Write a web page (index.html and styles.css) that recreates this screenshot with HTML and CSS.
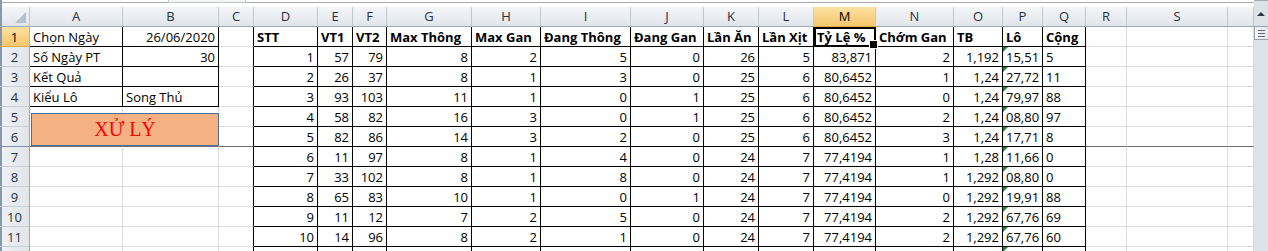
FILE: index.html
```html
<!DOCTYPE html>
<html lang="vi">
<head>
    <meta charset="UTF-8">
    <title>Thống kê lô</title>
    <link rel="stylesheet" href="styles.css">
</head>
<body>

<div class="app">
    <div class="sheet">
        <div class="formula"><span class="grip"></span></div>

        <div class="grid">
            <!-- column letters -->
            <div class="ch corner"></div>
            <div class="ch">A</div><div class="ch">B</div><div class="ch">C</div><div class="ch">D</div>
            <div class="ch">E</div><div class="ch">F</div><div class="ch">G</div><div class="ch">H</div>
            <div class="ch">I</div><div class="ch">J</div><div class="ch">K</div><div class="ch">L</div>
            <div class="ch hl">M</div><div class="ch">N</div><div class="ch">O</div><div class="ch">P</div>
            <div class="ch">Q</div><div class="ch">R</div><div class="ch">S</div><div class="ch"></div>

            <!-- 1 -->
            <div class="rh hl">1</div>
            <div class="b">Chọn Ngày</div><div class="b r">26/06/2020</div><div class="cr"></div>
            <div class="b h">STT</div><div class="b h">VT1</div><div class="b h">VT2</div><div class="b h">Max Thông</div>
            <div class="b h">Max Gan</div><div class="b h">Đang Thông</div><div class="b h">Đang Gan</div><div class="b h">Lần Ăn</div>
            <div class="b h">Lần Xịt</div><div class="b h act">Tỷ Lệ %</div><div class="b h">Chớm Gan</div><div class="b h">TB</div>
            <div class="b h">Lô</div><div class="b h">Cộng</div>
            <div></div><div></div><div></div>

            <!-- 2 -->
            <div class="rh">2</div>
            <div class="b">Số Ngày PT</div><div class="b r">30</div><div class="cr"></div>
            <div class="b r">1</div><div class="b r">57</div><div class="b r">79</div><div class="b r">8</div>
            <div class="b r">2</div><div class="b r">5</div><div class="b r">0</div><div class="b r">26</div>
            <div class="b r">5</div><div class="b r">83,871</div><div class="b r">2</div><div class="b r">1,192</div>
            <div class="b t">15,51</div><div class="b">5</div>
            <div></div><div></div><div></div>

            <!-- 3 -->
            <div class="rh">3</div>
            <div class="b">Kết Quả</div><div class="b"></div><div class="cr"></div>
            <div class="b r">2</div><div class="b r">26</div><div class="b r">37</div><div class="b r">8</div>
            <div class="b r">1</div><div class="b r">3</div><div class="b r">0</div><div class="b r">25</div>
            <div class="b r">6</div><div class="b r">80,6452</div><div class="b r">1</div><div class="b r">1,24</div>
            <div class="b t">27,72</div><div class="b">11</div>
            <div></div><div></div><div></div>

            <!-- 4 -->
            <div class="rh">4</div>
            <div class="b">Kiểu Lô</div><div class="b">Song Thủ</div><div class="cr"></div>
            <div class="b r">3</div><div class="b r">93</div><div class="b r">103</div><div class="b r">11</div>
            <div class="b r">1</div><div class="b r">0</div><div class="b r">1</div><div class="b r">25</div>
            <div class="b r">6</div><div class="b r">80,6452</div><div class="b r">0</div><div class="b r">1,24</div>
            <div class="b t">79,97</div><div class="b">88</div>
            <div></div><div></div><div></div>

            <!-- 5 -->
            <div class="rh">5</div>
            <div></div><div></div><div class="cr"></div>
            <div class="b r">4</div><div class="b r">58</div><div class="b r">82</div><div class="b r">16</div>
            <div class="b r">3</div><div class="b r">0</div><div class="b r">1</div><div class="b r">25</div>
            <div class="b r">6</div><div class="b r">80,6452</div><div class="b r">2</div><div class="b r">1,24</div>
            <div class="b t">08,80</div><div class="b">97</div>
            <div></div><div></div><div></div>

            <!-- 6 (frozen pane below) -->
            <div class="rh fz">6</div>
            <div class="fz"></div><div class="fz"></div><div class="cr fz"></div>
            <div class="b r">5</div><div class="b r">82</div><div class="b r">86</div><div class="b r">14</div>
            <div class="b r">3</div><div class="b r">2</div><div class="b r">0</div><div class="b r">25</div>
            <div class="b r">6</div><div class="b r">80,6452</div><div class="b r">3</div><div class="b r">1,24</div>
            <div class="b t">17,71</div><div class="b">8</div>
            <div class="fz"></div><div class="fz"></div><div class="fz"></div>

            <!-- 7 -->
            <div class="rh">7</div>
            <div></div><div></div><div class="cr"></div>
            <div class="b r">6</div><div class="b r">11</div><div class="b r">97</div><div class="b r">8</div>
            <div class="b r">1</div><div class="b r">4</div><div class="b r">0</div><div class="b r">24</div>
            <div class="b r">7</div><div class="b r">77,4194</div><div class="b r">1</div><div class="b r">1,28</div>
            <div class="b t">11,66</div><div class="b">0</div>
            <div></div><div></div><div></div>

            <!-- 8 -->
            <div class="rh">8</div>
            <div></div><div></div><div class="cr"></div>
            <div class="b r">7</div><div class="b r">33</div><div class="b r">102</div><div class="b r">8</div>
            <div class="b r">1</div><div class="b r">8</div><div class="b r">0</div><div class="b r">24</div>
            <div class="b r">7</div><div class="b r">77,4194</div><div class="b r">1</div><div class="b r">1,292</div>
            <div class="b t">08,80</div><div class="b">0</div>
            <div></div><div></div><div></div>

            <!-- 9 -->
            <div class="rh">9</div>
            <div></div><div></div><div class="cr"></div>
            <div class="b r">8</div><div class="b r">65</div><div class="b r">83</div><div class="b r">10</div>
            <div class="b r">1</div><div class="b r">0</div><div class="b r">1</div><div class="b r">24</div>
            <div class="b r">7</div><div class="b r">77,4194</div><div class="b r">0</div><div class="b r">1,292</div>
            <div class="b t">19,91</div><div class="b">88</div>
            <div></div><div></div><div></div>

            <!-- 10 -->
            <div class="rh">10</div>
            <div></div><div></div><div class="cr"></div>
            <div class="b r">9</div><div class="b r">11</div><div class="b r">12</div><div class="b r">7</div>
            <div class="b r">2</div><div class="b r">5</div><div class="b r">0</div><div class="b r">24</div>
            <div class="b r">7</div><div class="b r">77,4194</div><div class="b r">2</div><div class="b r">1,292</div>
            <div class="b t">67,76</div><div class="b">69</div>
            <div></div><div></div><div></div>

            <!-- 11 -->
            <div class="rh">11</div>
            <div></div><div></div><div class="cr"></div>
            <div class="b r">10</div><div class="b r">14</div><div class="b r">96</div><div class="b r">8</div>
            <div class="b r">2</div><div class="b r">1</div><div class="b r">0</div><div class="b r">24</div>
            <div class="b r">7</div><div class="b r">77,4194</div><div class="b r">2</div><div class="b r">1,292</div>
            <div class="b t">67,76</div><div class="b">60</div>
            <div></div><div></div><div></div>

            <!-- 12 (cut off by the window) -->
            <div class="rh"></div>
            <div></div><div></div><div class="cr"></div>
            <div class="b"></div><div class="b"></div><div class="b"></div><div class="b"></div>
            <div class="b"></div><div class="b"></div><div class="b"></div><div class="b"></div>
            <div class="b"></div><div class="b"></div><div class="b"></div><div class="b"></div>
            <div class="b t"></div><div class="b"></div>
            <div></div><div></div><div></div>
        </div>

        <button class="run">XỬ LÝ</button>
    </div>

    <div class="vscroll">
        <div class="arrow"></div>
        <div class="thumb"><span></span><span></span><span></span></div>
    </div>
</div>

</body>
</html>
```

FILE: styles.css
```css
* {
    box-sizing: border-box;
}

body {
    margin: 0;
    width: 1268px;
    height: 251px;
    overflow: hidden;
    background-color: #fff;
    font-family: "Open Sans", "Liberation Sans", sans-serif;
    font-size: 13px;
    color: #000;
}

.app {
    display: flex;
    height: 251px;
    overflow: hidden;
}

.sheet {
    position: relative;
    width: 1254px;
    box-shadow: inset 2px 0 #8797ad;
}

.formula {
    height: 7px;
    background: linear-gradient(#fff 2px, #a4abb4 2px, #a4abb4 3px, #fff 3px);
    box-shadow: inset 2px 0 #8797ad;
}

.formula .grip {
    display: block;
    width: 78px;
    height: 3px;
    margin-left: 168px;
    background-color: #f4f5f7;
    border: 1px solid #c3c8cf;
    border-top: none;
}

.grid {
    display: grid;
    grid-template-columns: 30px 93px 96px 35px 64px 35px 34px 85px 69px 90px 73px 55px 55px 62px 78px 49px 40px 43px 41px 101px 26px;
    grid-auto-rows: 20px;
}

.grid > div {
    border-right: 1px solid #dadcdd;
    border-bottom: 1px solid #dadcdd;
    padding: 1px 3px 0;
    line-height: 19px;
    white-space: nowrap;
}

.grid > .ch {
    padding: 0;
    text-align: center;
    color: #27313e;
    background: linear-gradient(#f3f5f8, #e1e5ea);
    border-right-color: #c1c7cf;
    border-bottom-color: #9ca7b4;
}

.grid > .rh {
    text-align: center;
    color: #27313e;
    background: linear-gradient(90deg, #eef1f4, #e1e5ea);
    border-right-color: #9ca7b4;
    border-bottom-color: #c7ced7;
    box-shadow: inset 2px 0 #8797ad;
}

.grid > .corner {
    position: relative;
    box-shadow: inset 2px 0 #8797ad;
}

.corner::after {
    content: "";
    position: absolute;
    right: 3px;
    bottom: 3px;
    border-left: 11px solid transparent;
    border-bottom: 11px solid #b8c0cb;
}

.grid > .hl {
    color: #000;
    background: linear-gradient(#fbe1a2, #f5c76d);
    border-bottom-color: #e0a94a;
}

.grid > .rh.hl {
    border-right-color: #e0a94a;
}

.grid > .b {
    border-right-color: #000;
    border-bottom-color: #000;
}

.grid > .cr {
    border-right-color: #000;
}

.grid > .fz {
    border-bottom-color: #6e6e6e;
}

.grid > .rh.fz {
    border-bottom-color: #7f8fa6;
}

.r {
    text-align: right;
}

.h {
    font-weight: 700;
}

.act {
    position: relative;
    outline: 2px solid #000;
    outline-offset: -2px;
}

.act::after {
    content: "";
    position: absolute;
    right: -3px;
    bottom: -3px;
    width: 7px;
    height: 7px;
    background-color: #000;
    border: 1px solid #fff;
}

/* number stored as text */
.t {
    position: relative;
}

.t::before {
    content: "";
    position: absolute;
    left: 0;
    top: 0;
    border-top: 5px solid #1c8a2c;
    border-right: 5px solid transparent;
}

.run {
    position: absolute;
    left: 31px;
    top: 113px;
    width: 188px;
    height: 33px;
    margin: 0;
    padding: 0 0 1px;
    background-color: #f4b183;
    border: 1px solid #4a6f9c;
    color: #ff0000;
    font-family: "Liberation Serif", serif;
    font-size: 20px;
}

.vscroll {
    width: 14px;
    height: 251px;
    background-color: #dde1e8;
    border-top: 1px solid #a4abb4;
}

.arrow {
    width: 0;
    height: 0;
    margin: 11px auto 0;
    border-left: 4px solid transparent;
    border-right: 4px solid transparent;
    border-bottom: 4px solid #2d3440;
}

.thumb {
    display: flex;
    flex-direction: column;
    justify-content: center;
    gap: 2px;
    height: 14px;
    margin-top: 10px;
    padding: 0 3px;
    background: linear-gradient(90deg, #f6f7f9, #e4e7ec);
    border: 1px solid #96a0ae;
    border-right: none;
}

.thumb span {
    height: 1px;
    background-color: #5d6673;
}
```
